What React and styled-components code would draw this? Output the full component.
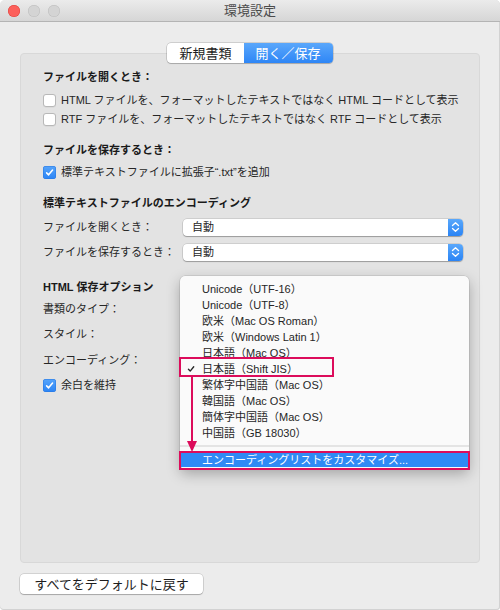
import React from 'react'
import styled, { createGlobalStyle } from 'styled-components'

const GlobalStyle = createGlobalStyle`
  html, body {
    margin: 0;
    padding: 0;
    background: #fff;
  }
  body {
    font-family: "Liberation Sans", "Noto Sans CJK JP", sans-serif;
    color: #262626;
    -webkit-font-smoothing: antialiased;
  }
  * {
    box-sizing: border-box;
  }
`

const PINK = '#dc0c5b'

const Window = styled.div`
  width: 500px;
  height: 610px;
  background: #ececec;
  border-radius: 5px 5px 4px 4px;
  overflow: hidden;
  display: flex;
  flex-direction: column;
  box-shadow: inset -1px 0 0 #d2d2d2, inset 0 -1px 0 #d2d2d2;
`

const TitleBar = styled.div`
  height: 22px;
  flex: none;
  display: grid;
  grid-template-columns: 1fr auto 1fr;
  align-items: center;
  background: linear-gradient(#ebebeb, #d6d6d6);
  border-bottom: 1px solid #b4b4b4;
`

const Lights = styled.div`
  display: flex;
  gap: 8px;
  padding-left: 8px;
`

const Light = styled.span`
  width: 12px;
  height: 12px;
  border-radius: 50%;
  background: ${(p) => (p.$red ? '#fc605b' : '#d4d4d4')};
  box-shadow: inset 0 0 0 0.5px ${(p) => (p.$red ? '#de3f3b' : '#bcbcbc')};
`

const Title = styled.div`
  font-size: 13px;
  color: #4b4b4b;
  line-height: 1;
`

const Body = styled.div`
  flex: 1;
  display: flex;
  flex-direction: column;
  padding: 21px 20px 16px;
`

const Segmented = styled.div`
  align-self: center;
  display: flex;
  height: 20px;
  position: relative;
  z-index: 1;
  border-radius: 4px;
  background: #fff;
  box-shadow: 0 0 0 0.5px rgba(0, 0, 0, 0.25), 0 1px 1px rgba(0, 0, 0, 0.15);
`

const Segment = styled.div`
  padding: 0 12px;
  display: flex;
  align-items: center;
  font-size: 13px;
  line-height: 1;
  color: ${(p) => (p.$active ? '#fff' : '#1e1e1e')};
  background: ${(p) => (p.$active ? 'linear-gradient(#5aa7fb, #2e86f6)' : 'transparent')};
  border-radius: ${(p) => (p.$active ? '0 4px 4px 0' : '4px 0 0 4px')};
`

const GroupBox = styled.div`
  flex: 1;
  margin-top: -10px;
  position: relative;
  background: #e3e3e3;
  border: 1px solid #d8d8d8;
  border-radius: 4px;
  padding: 14px 16px 0 22px;
  display: flex;
  flex-direction: column;
`

const Row = styled.div`
  height: 18px;
  flex: none;
  display: flex;
  align-items: center;
  margin-top: ${(p) => p.$mt || 0}px;
  font-size: 11px;
  line-height: 1;
`

const Heading = styled(Row)`
  font-weight: 700;
  color: #1a1a1a;
`

const Label = styled.span`
  width: 140px;
  flex: none;
`

const Box = styled.span`
  width: 13px;
  height: 13px;
  flex: none;
  margin-right: 5px;
  border-radius: 3px;
  display: flex;
  align-items: center;
  justify-content: center;
  background: ${(p) => (p.$checked ? 'linear-gradient(#57a5fb, #2b84f5)' : '#fff')};
  box-shadow: ${(p) =>
    p.$checked
      ? 'inset 0 0 0 0.5px #2776e0'
      : 'inset 0 0 0 1px #b8b8b8, 0 0.5px 0 rgba(0,0,0,0.08)'};
`

const Popup = styled.div`
  width: 280px;
  height: 17px;
  display: flex;
  align-items: center;
  padding-left: 9px;
  background: #fff;
  border-radius: 4px;
  box-shadow: 0 0 0 0.5px rgba(0, 0, 0, 0.18), 0 1px 1px rgba(0, 0, 0, 0.25);
`

const Stepper = styled.span`
  margin-left: auto;
  width: 15px;
  align-self: stretch;
  background: linear-gradient(#5aa8fb, #2a84f5);
  border-radius: 0 4px 4px 0;
  display: flex;
  align-items: center;
  justify-content: center;
`

const Menu = styled.div`
  position: absolute;
  left: 159px;
  top: 222px;
  width: 289px;
  height: 193px;
  padding: 4px 0 2px;
  background: #fafafa;
  border-radius: 5px;
  box-shadow: 0 0 0 0.5px rgba(0, 0, 0, 0.15), 0 5px 14px rgba(0, 0, 0, 0.28);
  z-index: 2;
`

const MenuItem = styled.div`
  height: 16px;
  padding-top: 2px;
  display: grid;
  grid-template-columns: 22px 1fr;
  align-items: center;
  font-size: 11px;
  line-height: 1;
  color: ${(p) => (p.$hot ? '#fff' : '#262626')};
  background: ${(p) => (p.$hot ? '#2f8af5' : 'transparent')};
`

const Tick = styled.span`
  padding-left: 7px;
  display: flex;
`

const Separator = styled.div`
  height: 11px;
  display: flex;
  align-items: center;
  &::after {
    content: '';
    flex: 1;
    height: 2px;
    background: #e4e4e4;
  }
`

const Marker = styled.div`
  position: absolute;
  left: ${(p) => p.$x}px;
  top: ${(p) => p.$y}px;
  width: ${(p) => p.$w}px;
  height: ${(p) => p.$h}px;
  border: 2px solid ${PINK};
  z-index: 3;
`

const Arrow = styled.svg`
  position: absolute;
  left: 165px;
  top: 323px;
  z-index: 3;
`

const Footer = styled.div`
  margin-top: 11px;
  display: flex;
`

const Button = styled.div`
  width: 183px;
  height: 20px;
  display: flex;
  align-items: center;
  justify-content: center;
  font-size: 13px;
  line-height: 1;
  color: #1e1e1e;
  background: #fff;
  border-radius: 4px;
  box-shadow: 0 0 0 0.5px rgba(0, 0, 0, 0.22), 0 1px 1px rgba(0, 0, 0, 0.2);
`

const Check = ({ color = '#fff', size = 9 }) => (
  <svg width={size} height={size} viewBox="0 0 10 10">
    <path d="M1.8 5.4 L4 7.6 L8.4 2.2" fill="none" stroke={color} strokeWidth="1.7" strokeLinecap="round" strokeLinejoin="round" />
  </svg>
)

const Chevrons = () => (
  <svg width="9" height="12" viewBox="0 0 9 12">
    <path d="M1.5 4.5 L4.5 1.8 L7.5 4.5 M1.5 7.5 L4.5 10.2 L7.5 7.5" fill="none" stroke="#fff" strokeWidth="1.3" strokeLinecap="round" strokeLinejoin="round" />
  </svg>
)

const CheckRow = ({ checked, mt, children }) => (
  <Row $mt={mt}>
    <Box $checked={checked}>{checked && <Check />}</Box>
    {children}
  </Row>
)

// popups under the open menu keep their value out of view
const SelectRow = ({ label, value, mt }) => (
  <Row $mt={mt}>
    <Label>{label}</Label>
    <Popup>
      {value}
      <Stepper>
        <Chevrons />
      </Stepper>
    </Popup>
  </Row>
)

const encodings = [
  'Unicode（UTF-16）',
  'Unicode（UTF-8）',
  '欧米（Mac OS Roman）',
  '欧米（Windows Latin 1）',
  '日本語（Mac OS）',
  '日本語（Shift JIS）',
  '繁体字中国語（Mac OS）',
  '韓国語（Mac OS）',
  '簡体字中国語（Mac OS）',
  '中国語（GB 18030）',
]

export default function App() {
  return (
    <>
      <GlobalStyle />
      <Window>
        <TitleBar>
          <Lights>
            <Light $red />
            <Light />
            <Light />
          </Lights>
          <Title>環境設定</Title>
          <span />
        </TitleBar>

        <Body>
          <Segmented>
            <Segment>新規書類</Segment>
            <Segment $active>開く／保存</Segment>
          </Segmented>

          <GroupBox>
            <Heading>ファイルを開くとき：</Heading>
            <CheckRow mt={5}>HTML ファイルを、フォーマットしたテキストではなく HTML コードとして表示</CheckRow>
            <CheckRow mt={1}>RTF ファイルを、フォーマットしたテキストではなく RTF コードとして表示</CheckRow>

            <Heading $mt={13}>ファイルを保存するとき：</Heading>
            <CheckRow checked mt={4}>標準テキストファイルに拡張子“.txt”を追加</CheckRow>

            <Heading $mt={13}>標準テキストファイルのエンコーディング</Heading>
            <SelectRow mt={6} label="ファイルを開くとき：" value="自動" />
            <SelectRow mt={7} label="ファイルを保存するとき：" value="自動" />

            <Heading $mt={17}>HTML 保存オプション</Heading>
            <SelectRow mt={4} label="書類のタイプ：" />
            <SelectRow mt={7} label="スタイル：" />
            <SelectRow mt={8} label="エンコーディング：" />
            <CheckRow checked mt={7}>余白を維持</CheckRow>

            <Menu>
              {encodings.map((name) => (
                <MenuItem key={name}>
                  <Tick>{name === '日本語（Shift JIS）' && <Check color="#262626" size={8} />}</Tick>
                  <span>{name}</span>
                </MenuItem>
              ))}
              <Separator />
              <MenuItem $hot>
                <span />
                <span>エンコーディングリストをカスタマイズ...</span>
              </MenuItem>
            </Menu>

            <Marker $x={158} $y={303} $w={155} $h={20} />
            <Marker $x={158} $y={397} $w={291} $h={19} />
            <Arrow width="12" height="76" viewBox="0 0 12 76">
              <line x1="6" y1="0" x2="6" y2="66" stroke={PINK} strokeWidth="2" />
              <polygon points="1,64 11,64 6,75" fill={PINK} />
            </Arrow>
          </GroupBox>

          <Footer>
            <Button>すべてをデフォルトに戻す</Button>
          </Footer>
        </Body>
      </Window>
    </>
  )
}
